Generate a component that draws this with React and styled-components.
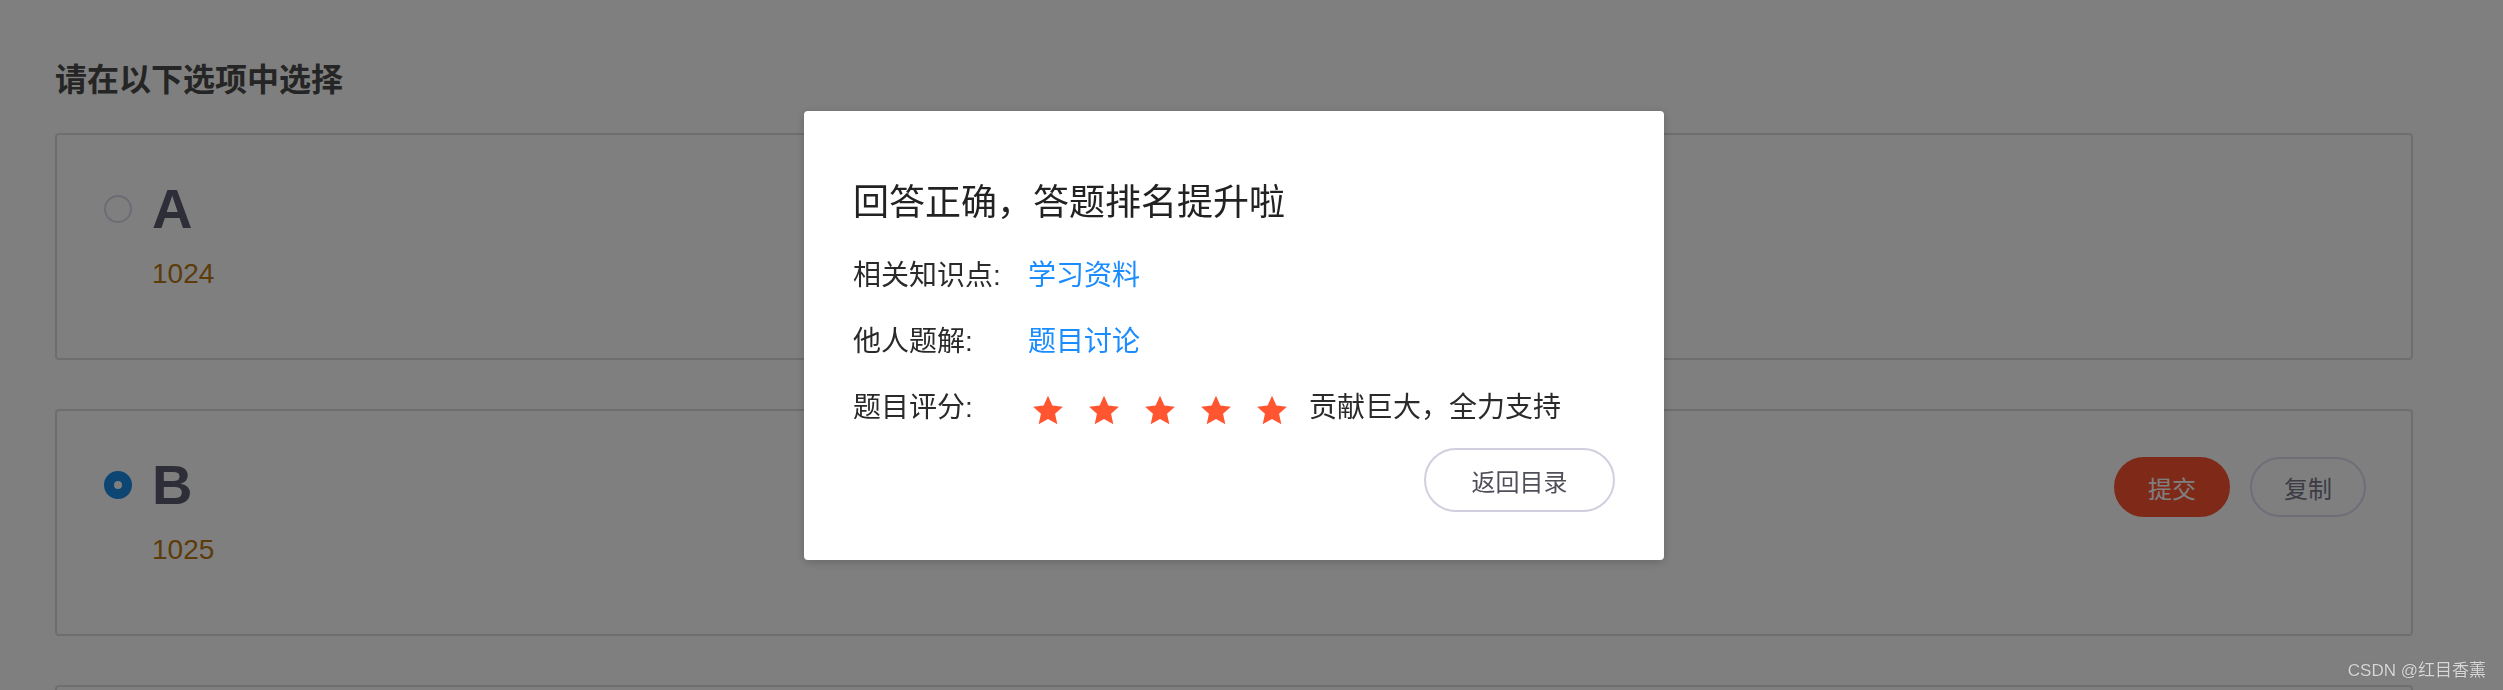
import React from "react";
import styled, { createGlobalStyle } from "styled-components";

const GlobalStyle = createGlobalStyle`
  html, body {
    margin: 0;
    padding: 0;
    overflow: hidden;
    background: #ffffff;
    font-family: "Liberation Sans", "Noto Sans CJK SC", sans-serif;
  }
`;

const Page = styled.div`
  padding: 54px 90px 0 55px;
  height: 690px;
  box-sizing: border-box;
`;

const Heading = styled.h2`
  margin: 0 0 33px;
  font-family: "Noto Sans CJK SC", sans-serif;
  font-size: 32px;
  line-height: 46px;
  font-weight: 700;
  color: #4a4a4a;
`;

const OptionList = styled.div`
  display: flex;
  flex-direction: column;
  gap: 49px;
`;

const Card = styled.div`
  border: 2px solid #dcdcdc;
  border-radius: 4px;
  padding: 42px 45px 68px 47px;
  height: 227px;
  box-sizing: border-box;
`;

const OptionRow = styled.div`
  display: flex;
  align-items: center;
  height: 64px;
`;

const Radio = styled.span`
  width: 28px;
  height: 28px;
  box-sizing: border-box;
  border-radius: 50%;
  background: #ffffff;
  border: ${({ checked }) => (checked ? "10px solid #1a8ae6" : "2px solid #d8d8e8")};
  margin-right: 20px;
  flex-shrink: 0;
`;

const Letter = styled.span`
  font-family: "Liberation Sans", sans-serif;
  font-size: 56px;
  line-height: 64px;
  font-weight: 700;
  color: #5c5d70;
`;

const Value = styled.div`
  margin: 17px 0 0 48px;
  font-family: "Liberation Sans", sans-serif;
  font-size: 28px;
  line-height: 32px;
  color: #b87814;
`;

const Actions = styled.div`
  margin-left: auto;
  display: flex;
  gap: 20px;
  margin-top: 4px;
`;

const PillButton = styled.button`
  width: 116px;
  height: 60px;
  border-radius: 30px;
  box-sizing: border-box;
  font-family: "Noto Sans CJK SC", sans-serif;
  font-size: 24px;
  cursor: pointer;
  border: 2px solid ${({ primary }) => (primary ? "#fe5432" : "#dcdcf0")};
  background: ${({ primary }) => (primary ? "#fe5432" : "#ffffff")};
  color: ${({ primary }) => (primary ? "#ffffff" : "#78788c")};
`;

const Overlay = styled.div`
  position: fixed;
  inset: 0;
  background: rgba(0, 0, 0, 0.5);
  display: flex;
  justify-content: center;
  align-items: flex-start;
  padding: 111px 35px 0 0;
`;

const Modal = styled.section`
  width: 860px;
  box-sizing: border-box;
  background: #ffffff;
  border-radius: 4px;
  box-shadow: 0 2px 10px rgba(0, 0, 0, 0.2);
  padding: 62px 49px 48px;
  font-family: "Liberation Sans", "Noto Sans CJK SC", sans-serif;
  color: #2a2a2a;
`;

const ModalBody = styled.div`
  display: flex;
  flex-direction: column;
  gap: 26px;
`;

const ModalTitle = styled.h3`
  margin: 0 0 5px;
  font-family: "Noto Sans CJK SC", sans-serif;
  font-size: 36px;
  line-height: 52px;
  font-weight: 400;
  color: #222;
`;

const InfoRow = styled.div`
  display: flex;
  align-items: center;
  height: 40px;
  font-size: 28px;
  line-height: 40px;
`;

const Label = styled.span`
  width: 175px;
  flex-shrink: 0;
`;

const Link = styled.a`
  color: #1a8cff;
  text-decoration: none;
  cursor: pointer;
`;

const Stars = styled.div`
  display: flex;
  gap: 24px;
  margin: 5px 21px 0 4px;
`;

const ModalFooter = styled.div`
  display: flex;
  justify-content: flex-end;
  margin-top: 20px;
`;

const BackButton = styled.button`
  width: 191px;
  height: 64px;
  border-radius: 32px;
  box-sizing: border-box;
  border: 2px solid #cfcfdf;
  background: #ffffff;
  color: #4f4f5a;
  font-family: "Noto Sans CJK SC", sans-serif;
  font-size: 24px;
  cursor: pointer;
`;

const Watermark = styled.div`
  position: fixed;
  right: 17px;
  bottom: 9px;
  font-family: "Liberation Sans", "Noto Sans CJK SC", sans-serif;
  font-size: 17px;
  color: #d8d8d8;
  text-shadow: 0 0 1px rgba(0, 0, 0, 0.3);
`;

const Star = () => (
  <svg width="32" height="31" viewBox="0 0 24 23">
    <path
      d="M12 0.5l3.3 7.3 7.9 0.8-5.9 5.4 1.7 7.9L12 17.9l-7 4 1.7-7.9L0.8 8.6l7.9-0.8z"
      fill="#ff5631"
    />
  </svg>
);

const options = [
  { key: "A", value: "1024", checked: false },
  { key: "B", value: "1025", checked: true },
];

export default function App() {
  return (
    <>
      <GlobalStyle />
      <Page>
        <Heading>请在以下选项中选择</Heading>
        <OptionList>
          {options.map((o) => (
            <Card key={o.key}>
              <OptionRow>
                <Radio checked={o.checked} />
                <Letter>{o.key}</Letter>
                {o.checked && (
                  <Actions>
                    <PillButton primary>提交</PillButton>
                    <PillButton>复制</PillButton>
                  </Actions>
                )}
              </OptionRow>
              <Value>{o.value}</Value>
            </Card>
          ))}
          <Card />
        </OptionList>
      </Page>
      <Overlay>
        <Modal>
          <ModalBody>
            <ModalTitle>回答正确，答题排名提升啦</ModalTitle>
            <InfoRow>
              <Label>相关知识点:</Label>
              <Link>学习资料</Link>
            </InfoRow>
            <InfoRow>
              <Label>他人题解:</Label>
              <Link>题目讨论</Link>
            </InfoRow>
            <InfoRow>
              <Label>题目评分:</Label>
              <Stars>
                {[0, 1, 2, 3, 4].map((i) => (
                  <Star key={i} />
                ))}
              </Stars>
              <span>贡献巨大，全力支持</span>
            </InfoRow>
          </ModalBody>
          <ModalFooter>
            <BackButton>返回目录</BackButton>
          </ModalFooter>
        </Modal>
      </Overlay>
      <Watermark>CSDN @红目香薰</Watermark>
    </>
  );
}
